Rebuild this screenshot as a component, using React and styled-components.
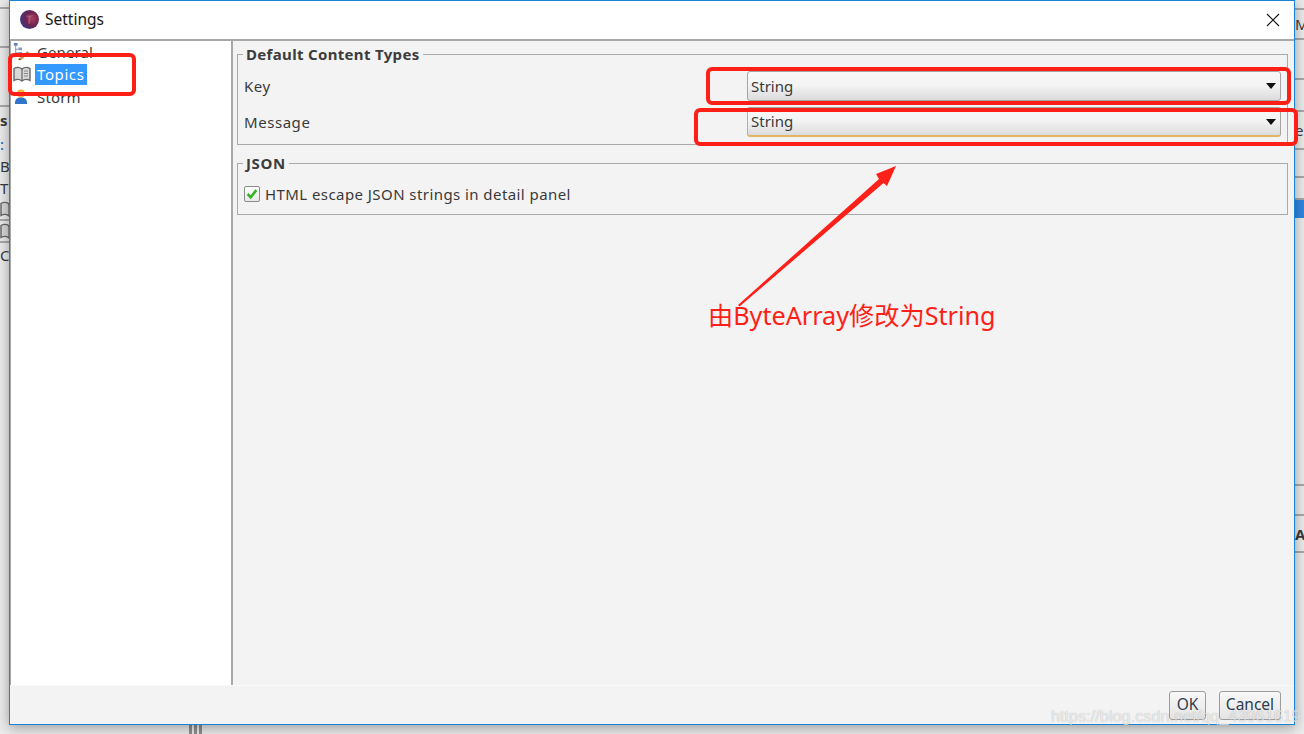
import styled, { createGlobalStyle } from 'styled-components'

const GlobalStyle = createGlobalStyle`
    html, body {
        margin: 0;
        padding: 0;
        background: #e6e6e6;
        overflow: hidden;
    }
`

const FONT = `"Noto Sans", "Liberation Sans", sans-serif`

const leftRows = [
    { h: 9 }, { h: 39 }, { h: 59 },
    { h: 26, text: 's', bold: true, plain: true },
    { h: 22, text: ':', plain: true, color: '#1a5fa8' },
    { h: 22, text: 'B', plain: true },
    { h: 22, text: 'T', plain: true },
    { h: 22, book: true },
    { h: 22, book: true },
    { h: 24, text: 'C', plain: true },
]

const rightRows = [
    { h: 10 }, { h: 30, text: 'M' }, { h: 40 }, { h: 32 },
    { h: 38, text: 'e' }, { h: 28 }, { h: 22 },
    { h: 18, blue: true, plain: true },
    { h: 265, plain: true }, { h: 3 }, { h: 30 },
    { h: 37, text: 'A', bold: true },
]

export default function App() {
    return (
        <>
            <GlobalStyle />
            <Desktop>
                <BackStrip>
                    {leftRows.map((row, index) => <BackRowItem key={index} row={row} />)}
                </BackStrip>

                <Column>
                    <Window>
                        <TitleBar>
                            <AppIcon />
                            <TitleText>Settings</TitleText>
                            <CloseButton>
                                <svg width="14" height="14" viewBox="0 0 14 14">
                                    <path d="M1 1 L13 13 M13 1 L1 13" stroke="#111" strokeWidth="1.1" fill="none" />
                                </svg>
                            </CloseButton>
                        </TitleBar>

                        <Body>
                            <Sidebar>
                                <TreeRow>
                                    <GeneralIcon />
                                    <TreeLabel $spacing={0.1}>General</TreeLabel>
                                </TreeRow>
                                <TreeRow>
                                    <BookIcon />
                                    <TreeLabel $selected $spacing={0.6}>Topics</TreeLabel>
                                </TreeRow>
                                <TreeRow>
                                    <StormIcon />
                                    <TreeLabel $spacing={0.15}>Storm</TreeLabel>
                                </TreeRow>
                            </Sidebar>

                            <Panel>
                                <Group $height={91}>
                                    <GroupTitle $spacing={0.33}>Default Content Types</GroupTitle>
                                    <FieldRow>
                                        <FieldLabel>Key</FieldLabel>
                                        <Combo>
                                            <ComboText>String</ComboText>
                                            <ComboArrow />
                                        </Combo>
                                    </FieldRow>
                                    <FieldRow>
                                        <FieldLabel>Message</FieldLabel>
                                        <Combo $focused>
                                            <ComboText>String</ComboText>
                                            <ComboArrow />
                                        </Combo>
                                    </FieldRow>
                                </Group>

                                <Group $height={52}>
                                    <GroupTitle $spacing={0.6}>JSON</GroupTitle>
                                    <CheckRow>
                                        <CheckBox>
                                            <svg width="12" height="12" viewBox="0 0 11 11">
                                                <path d="M1.5 5.5 L4.3 8.5 L9.5 2" stroke="#35b324" strokeWidth="2.4" fill="none" />
                                            </svg>
                                        </CheckBox>
                                        HTML escape JSON strings in detail panel
                                    </CheckRow>
                                </Group>
                            </Panel>
                        </Body>

                        <Footer>
                            <FooterButton $width={37}>OK</FooterButton>
                            <FooterButton $width={62}>Cancel</FooterButton>
                        </Footer>
                    </Window>
                    <BelowWindow>
                        <Grip /><Grip /><Grip />
                    </BelowWindow>
                </Column>

                <BackStrip>
                    {rightRows.map((row, index) => <BackRowItem key={index} row={row} />)}
                </BackStrip>

                <RedBox $x={8} $y={53} $w={128} $h={43} />
                <RedBox $x={706} $y={67} $w={585} $h={38} />
                <RedBox $x={694} $y={108} $w={604} $h={38} />
                <ArrowLayer width="1304" height="734" viewBox="0 0 1304 734">
                    <path d="M738 305 L879 179 L876 174 L896 166 L887 186 L883.5 183 L739.5 306.5 Z" fill="#fe2019" />
                </ArrowLayer>
                <Annotation>由ByteArray修改为String</Annotation>
                <Watermark>https://blog.csdn.net/qq_43961619</Watermark>
            </Desktop>
        </>
    )
}

function BackRowItem({ row }) {
    return (
        <BackRow $h={row.h} $plain={row.plain} $blue={row.blue}>
            {row.book ? <BookIcon /> : null}
            {row.text ? <BackGlyph $bold={row.bold} $color={row.color}>{row.text}</BackGlyph> : null}
        </BackRow>
    )
}

function AppIcon() {
    return (
        <AppIconBox width="19" height="19" viewBox="0 0 18 18">
            <defs>
                <radialGradient id="appGlow" cx="0.65" cy="0.45" r="0.75">
                    <stop offset="0" stopColor="#a83a5c" />
                    <stop offset="0.5" stopColor="#6c2350" />
                    <stop offset="1" stopColor="#27429c" />
                </radialGradient>
            </defs>
            <circle cx="9" cy="9" r="9" fill="url(#appGlow)" />
            <path d="M5 5.5 L13 5 L10 7 L9.5 13 L8 13 L8 7 Z" fill="#c98aa4" opacity="0.45" />
        </AppIconBox>
    )
}

function GeneralIcon() {
    return (
        <IconBox width="18" height="18" viewBox="0 0 20 20">
            <rect x="1" y="0" width="4" height="3" fill="#5b7fb5" />
            <path d="M3 3 V11 H6 M3 7 H6" stroke="#7d8ba5" fill="none" />
            <rect x="6" y="5" width="4" height="3" fill="#7f9cc4" />
            <rect x="6" y="10" width="4" height="3" fill="#7f9cc4" />
            <path d="M7 17 L16 9 L18 11 L9 19 L6 19 Z" fill="#c79a4a" />
            <path d="M7 17 L6 19 L9 19 Z" fill="#4a4a3a" />
        </IconBox>
    )
}

function BookIcon() {
    return (
        <IconBox width="18" height="17" viewBox="0 0 18 17">
            <path d="M1 2.5 C3.5 1 6.5 1 9 3 C11.5 1 14.5 1 17 2.5 V14.5 C14.5 13 11.5 13 9 15 C6.5 13 3.5 13 1 14.5 Z" fill="#d8d8d8" stroke="#666" strokeWidth="1.4" />
            <path d="M9 3 V15" stroke="#666" strokeWidth="1.2" />
            <path d="M11 5 H15 M11 7.5 H15 M11 10 H15" stroke="#888" />
        </IconBox>
    )
}

function StormIcon() {
    return (
        <StormBox width="14" height="18" viewBox="0 0 16 18">
            <circle cx="8" cy="5" r="4.5" fill="#f2b632" />
            <path d="M1 17 C1 11 4 9.5 8 9.5 C12 9.5 15 11 15 17 Z" fill="#2f74c9" />
        </StormBox>
    )
}

const Desktop = styled.div`
    position: relative;
    width: 1304px;
    height: 734px;
    display: flex;
    overflow: hidden;
    font-family: ${FONT};
    background: #e8e8e8;
`

const BackStrip = styled.div`
    flex: 1;
    min-width: 0;
    display: flex;
    flex-direction: column;
    align-items: stretch;
    background: #ebebeb;
    overflow: hidden;
`

const BackRow = styled.div`
    height: ${(p) => p.$h}px;
    flex: none;
    box-sizing: border-box;
    display: flex;
    align-items: center;
    overflow: hidden;
    background: ${(p) => (p.$blue ? '#2f86e0' : 'transparent')};
    border-bottom: ${(p) => (p.$plain ? 'none' : '2px solid #a9a9a9')};
`

const BackGlyph = styled.span`
    font-size: 15px;
    font-weight: ${(p) => (p.$bold ? 700 : 400)};
    color: ${(p) => p.$color || '#3a3a3a'};
`

const Column = styled.div`
    flex: none;
    width: 1286px;
    display: flex;
    flex-direction: column;
`

const Window = styled.div`
    flex: none;
    height: 725px;
    box-sizing: border-box;
    border: 1px solid #1883d7;
    background: #f3f3f3;
    display: flex;
    flex-direction: column;
    box-shadow: 0 2px 12px rgba(0, 0, 0, 0.35);
    position: relative;
`

const BelowWindow = styled.div`
    flex: 1;
    display: flex;
    gap: 2px;
    padding-left: 180px;
`

const Grip = styled.div`
    width: 3px;
    background: #8d8d8d;
`

const TitleBar = styled.div`
    flex: none;
    height: 38px;
    background: #fff;
    display: flex;
    align-items: center;
    padding-left: 10px;
`

const AppIconBox = styled.svg`
    flex: none;
    margin-right: 6px;
    margin-bottom: 1px;
    filter: blur(0.4px);
`

const TitleText = styled.span`
    font-size: 15.5px;
    color: #1a1a1a;
    padding-bottom: 2px;
`

const CloseButton = styled.div`
    margin-left: auto;
    margin-right: 14px;
    display: flex;
`

const Body = styled.div`
    flex: 1;
    min-height: 0;
    display: flex;
    border-top: 2px solid #a8a8a8;
    border-left: 1px solid #a8a8a8;
`

const Sidebar = styled.div`
    flex: none;
    width: 220px;
    background: #fff;
    border-right: 2px solid #a8a8a8;
    display: flex;
    flex-direction: column;
`

const TreeRow = styled.div`
    height: 22.5px;
    display: grid;
    grid-template-columns: 20px auto;
    justify-content: start;
    align-items: center;
    padding-left: 2px;
    gap: 2px;
`

const IconBox = styled.svg`
    flex: none;
`

const StormBox = styled.svg`
    margin-left: 1px;
`

const TreeLabel = styled.span`
    font-size: 15px;
    line-height: 21px;
    letter-spacing: ${(p) => p.$spacing}px;
    padding: 0 3px 0 2px;
    color: ${(p) => (p.$selected ? '#fff' : '#3a3a3a')};
    background: ${(p) => (p.$selected ? '#3399ff' : 'transparent')};
`

const Panel = styled.div`
    flex: 1;
    min-width: 0;
    padding: 13px 6px 0 4px;
    display: flex;
    flex-direction: column;
    gap: 18px;
`

const Group = styled.div`
    position: relative;
    height: ${(p) => p.$height}px;
    box-sizing: border-box;
    border: 1px solid #a9a9a9;
    padding: 16px 6px 0 6px;
    display: flex;
    flex-direction: column;
    gap: 6px;
`

const GroupTitle = styled.div`
    position: absolute;
    top: -11px;
    left: 5px;
    padding: 0 3px;
    background: #f3f3f3;
    font-size: 15px;
    line-height: 20px;
    font-weight: 700;
    letter-spacing: ${(p) => p.$spacing}px;
    color: #3c3c3c;
`

const FieldRow = styled.div`
    display: flex;
    align-items: center;
    justify-content: space-between;
    height: 30px;
`

const FieldLabel = styled.span`
    font-size: 15px;
    letter-spacing: 0.55px;
    color: #3a3a3a;
    padding-bottom: 1px;
`

const Combo = styled.div`
    width: 534px;
    height: 100%;
    box-sizing: border-box;
    display: flex;
    align-items: center;
    justify-content: space-between;
    padding: 0 3px;
    border: 1px solid #a5a5a5;
    border-bottom-color: ${(p) => (p.$focused ? '#e2b566' : '#a5a5a5')};
    border-left-color: ${(p) => (p.$focused ? '#c9ae7d' : '#a5a5a5')};
    border-bottom-width: ${(p) => (p.$focused ? 2 : 1)}px;
    border-radius: 3px;
    background: linear-gradient(#f8f8f8, #f4f4f4 45%, #dcdcdc);
`

const ComboText = styled.span`
    font-size: 15px;
    color: #3a3a3a;
    padding-bottom: 1px;
`

const ComboArrow = styled.span`
    width: 0;
    height: 0;
    margin-right: 1px;
    border-left: 5.5px solid transparent;
    border-right: 5.5px solid transparent;
    border-top: 6px solid #111;
`

const CheckRow = styled.label`
    display: flex;
    align-items: center;
    gap: 5px;
    height: 30px;
    font-size: 15px;
    letter-spacing: 0.43px;
    color: #3a3a3a;
    margin-top: -1px;
`

const CheckBox = styled.span`
    width: 16px;
    height: 16px;
    box-sizing: border-box;
    display: flex;
    align-items: center;
    justify-content: center;
    border: 1px solid #8c8c8c;
    border-radius: 2px;
    background: linear-gradient(#fdfdfd, #e8e8e8);
`

const Footer = styled.div`
    flex: none;
    height: 39px;
    box-sizing: border-box;
    border-top: 1px solid #fafafa;
    background: #f3f3f3;
    display: flex;
    justify-content: flex-end;
    align-items: flex-start;
    gap: 13px;
    padding: 5px 13px 0 0;
`

const FooterButton = styled.div`
    width: ${(p) => p.$width}px;
    height: 29px;
    box-sizing: border-box;
    padding-bottom: 3px;
    display: flex;
    align-items: center;
    justify-content: center;
    border: 1px solid #9c9c9c;
    border-radius: 3px;
    background: linear-gradient(#f8f8f8, #e4e4e4);
    font-size: 15.5px;
    color: #2f3c4c;
`

const RedBox = styled.div`
    position: absolute;
    left: ${(p) => p.$x}px;
    top: ${(p) => p.$y}px;
    width: ${(p) => p.$w}px;
    height: ${(p) => p.$h}px;
    box-sizing: border-box;
    border: 4px solid #fe1f17;
    border-radius: 6px;
    pointer-events: none;
`

const ArrowLayer = styled.svg`
    position: absolute;
    left: 0;
    top: 0;
    pointer-events: none;
`

const Annotation = styled.div`
    position: absolute;
    left: 708px;
    top: 297px;
    font-family: "Noto Sans", "Noto Sans CJK SC", sans-serif;
    font-size: 25.2px;
    line-height: 36px;
    color: #fe1f17;
    white-space: nowrap;
`

const Watermark = styled.div`
    position: absolute;
    left: 1051px;
    top: 706px;
    font-family: "Liberation Sans", sans-serif;
    font-size: 16.3px;
    line-height: 20px;
    color: rgba(255, 255, 255, 0.7);
    text-shadow: 0 0 1px rgba(0, 0, 0, 0.3);
    white-space: nowrap;
`
